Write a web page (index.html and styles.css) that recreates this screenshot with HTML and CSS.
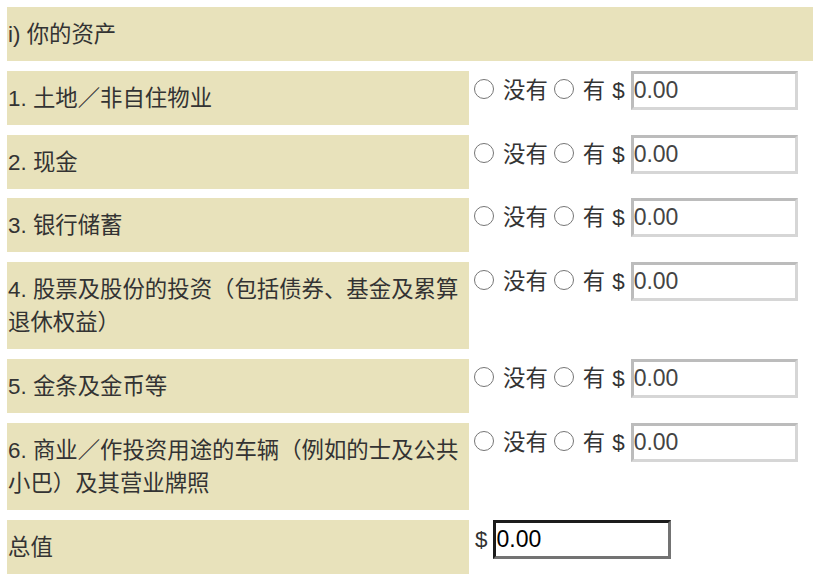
FILE: index.html
```html
<!DOCTYPE html>
<html lang="zh-Hans">
<head>
    <meta charset="UTF-8">
    <meta name="viewport" content="width=device-width, initial-scale=1.0">
    <title>你的资产</title>
    <link rel="stylesheet" href="styles.css">
</head>
<body>
    <!-- 资产表 -->
    <div class="assets">
        <div class="cell title">i) 你的资产</div>

        <div class="cell label">1. 土地／非自住物业</div>
        <div class="answer">
            <input type="radio" name="a1" class="radio"><span class="opt">没有</span>
            <input type="radio" name="a1" class="radio"><span class="opt">有</span>
            <span class="cur">$</span><input type="text" class="amount" value="0.00">
        </div>

        <div class="cell label">2. 现金</div>
        <div class="answer">
            <input type="radio" name="a2" class="radio"><span class="opt">没有</span>
            <input type="radio" name="a2" class="radio"><span class="opt">有</span>
            <span class="cur">$</span><input type="text" class="amount" value="0.00">
        </div>

        <div class="cell label">3. 银行储蓄</div>
        <div class="answer">
            <input type="radio" name="a3" class="radio"><span class="opt">没有</span>
            <input type="radio" name="a3" class="radio"><span class="opt">有</span>
            <span class="cur">$</span><input type="text" class="amount" value="0.00">
        </div>

        <div class="cell label">4. 股票及股份的投资（包括债券、基金及累算退休权益）</div>
        <div class="answer">
            <input type="radio" name="a4" class="radio"><span class="opt">没有</span>
            <input type="radio" name="a4" class="radio"><span class="opt">有</span>
            <span class="cur">$</span><input type="text" class="amount" value="0.00">
        </div>

        <div class="cell label">5. 金条及金币等</div>
        <div class="answer">
            <input type="radio" name="a5" class="radio"><span class="opt">没有</span>
            <input type="radio" name="a5" class="radio"><span class="opt">有</span>
            <span class="cur">$</span><input type="text" class="amount" value="0.00">
        </div>

        <div class="cell label">6. 商业／作投资用途的车辆（例如的士及公共小巴）及其营业牌照</div>
        <div class="answer">
            <input type="radio" name="a6" class="radio"><span class="opt">没有</span>
            <input type="radio" name="a6" class="radio"><span class="opt">有</span>
            <span class="cur">$</span><input type="text" class="amount" value="0.00">
        </div>

        <div class="cell label">总值</div>
        <div class="answer">
            <span class="cur">$</span><input type="text" class="amount total" value="0.00" readonly>
        </div>
    </div>
</body>
</html>
```

FILE: styles.css
```css
body {
    font-family: "Liberation Sans", "Noto Sans CJK SC", sans-serif;
    font-size: 22.4px;
    color: #333;
    margin: 0;
    padding: 7px 0 0 7px;
}
.assets {
    display: grid;
    grid-template-columns: 462px 1fr;
    column-gap: 2px;
    row-gap: 9.8px;
}
.cell {
    background-color: #e8e2bb; /* fundo bege */
    padding: 11px 0 10px 1px;
    line-height: 33px;
}
.title {
    grid-column: 1 / 3;
}
.answer {
    display: flex;
    align-items: flex-start;
    align-self: start;
    padding-left: 3px;
    line-height: 39px;
}
.radio {
    width: 20px;
    height: 20px;
    margin: 8px 9px 0 0;
    accent-color: #767676;
}
.opt {
    margin-right: 6px;
}
.cur {
    margin: 0 6px 0 1px;
}
.amount {
    box-sizing: border-box;
    width: 167px;
    height: 39px;
    margin: 0;
    padding: 0;
    border: 3px solid;
    border-color: #bcbcbc #d6d6d6 #d6d6d6 #bcbcbc;
    font-family: "Liberation Sans", sans-serif;
    font-size: 23px;
    color: #444;
    background: #fff;
    outline: none;
}
.amount.total {
    width: 178px;
    color: #000;
    border-color: #1c1c1c #737373 #737373 #1c1c1c;
}
```
